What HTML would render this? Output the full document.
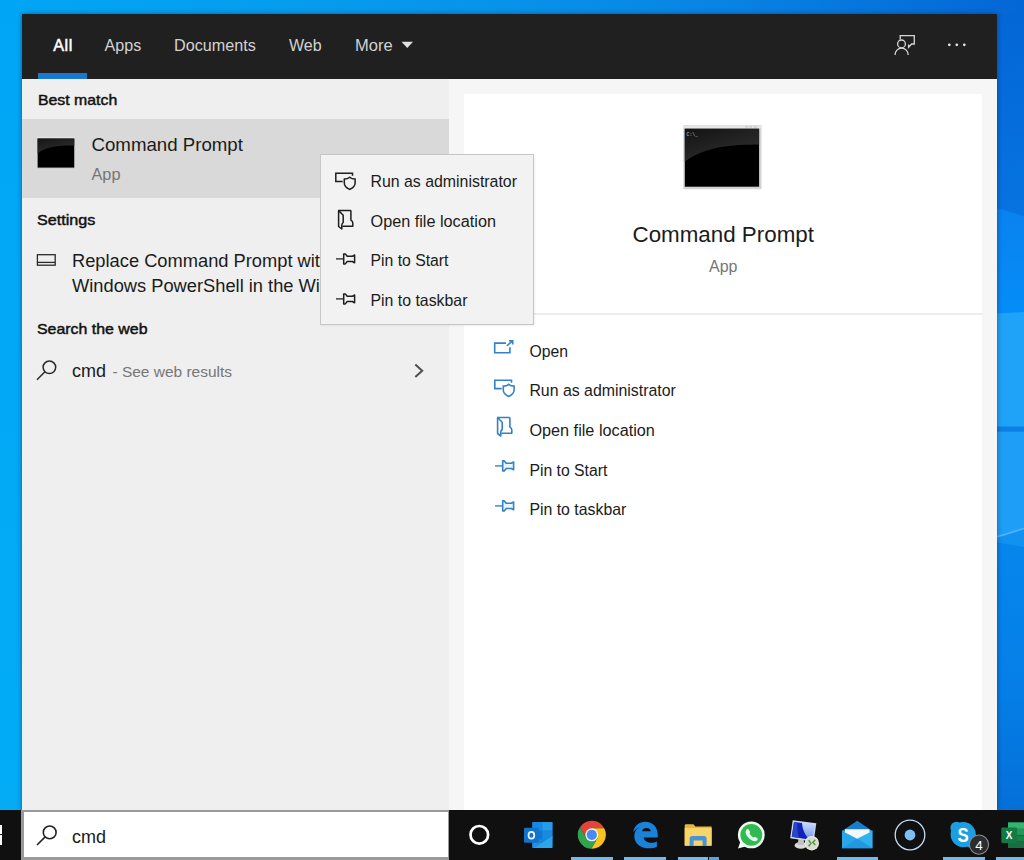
<!DOCTYPE html>
<html lang="en">
<head>
<meta charset="utf-8">
<title>Search - Command Prompt</title>
<style>
html,body{margin:0;padding:0;}
body{width:1024px;height:860px;overflow:hidden;position:relative;font-family:"Liberation Sans",Arial,sans-serif;background:#0a84e4;}
.abs,.t{position:absolute;}
.t{white-space:pre;}
svg{position:absolute;overflow:visible;}
#desk{left:0;top:0;width:1024px;height:860px;background:linear-gradient(90deg,#01a6f5 0%,#069cee 30%,#0892ea 50%,#0884e4 70%,#0570da 90%,#0467d6 100%);}
#deskL{left:0;top:0;width:22px;height:810px;background:linear-gradient(180deg,#01a5f5,#03acf5);}
#panel{left:21.5px;top:14px;width:975.3px;height:796px;background:#f6f6f6;box-shadow:0 0 5px rgba(0,20,60,0.45);}
#hdr{left:21.5px;top:14px;width:975.3px;height:64.6px;background:#202020;}
#leftpane{left:21.5px;top:78.6px;width:427.5px;height:731.4px;background:#efefef;}
#sel{left:21.5px;top:118.6px;width:427.5px;height:79px;background:#d9d9d9;}
#card1{left:464px;top:94.2px;width:517.5px;height:218.8px;background:#fff;}
#card2{left:464px;top:315px;width:517.5px;height:495px;background:#fff;}
#ctx{left:320px;top:154px;width:212px;height:169px;background:#f2f2f2;border:1px solid #c6c6c6;box-shadow:1px 1px 2px rgba(0,0,0,0.06);}
#task{left:0;top:810px;width:1024px;height:50px;background:#101010;}
#sbox{left:21px;top:810px;width:428px;height:50px;background:#9a9a9a;}
#sboxin{left:24px;top:812px;width:424px;height:45px;background:#fff;}
.ind{position:absolute;top:857px;height:3px;background:#76b9ed;}
</style>
</head>
<body>
<div id="desk" class="abs"></div>
<div id="deskL" class="abs"></div>
<svg style="left:990px;top:14px" width="34" height="796" viewBox="990 14 34 796">
<defs><linearGradient id="gr1" x1="0" y1="0" x2="0" y2="1"><stop offset="0" stop-color="#0467d6"/><stop offset="1" stop-color="#0674e2"/></linearGradient>
<linearGradient id="gr1b" x1="0" y1="0" x2="0" y2="1"><stop offset="0" stop-color="#0a82ee"/><stop offset="1" stop-color="#058df7"/></linearGradient>
<linearGradient id="gr2" x1="0" y1="0" x2="0" y2="1"><stop offset="0" stop-color="#0686ec"/><stop offset="0.5" stop-color="#0580e8"/><stop offset="1" stop-color="#0470d8"/></linearGradient></defs>
<rect x="990" y="14" width="34" height="210" fill="url(#gr1)"/>
<path d="M990 206 L1024 216 V316 H990 Z" fill="url(#gr1b)"/>
<path d="M990 314 L1024 312 V428 H990 Z" fill="#1ea3f9"/>
<rect x="990" y="426.5" width="34" height="5" fill="#0a80e2"/>
<rect x="990" y="431.5" width="34" height="106" fill="#1e9ef6"/>
<path d="M990 539 L1024 528.5 V550 H990 Z" fill="#1292f0"/>
<path d="M990 541 L1024 547 V810 H990 Z" fill="url(#gr2)"/>
<path d="M990 539 L1024 528.5" stroke="#52b6f9" stroke-width="1.6"/>
</svg>
<div id="panel" class="abs"></div>
<div id="hdr" class="abs"></div>
<div id="leftpane" class="abs"></div>
<div id="sel" class="abs"></div>
<div id="card1" class="abs"></div>
<div id="card2" class="abs"></div>
<div class="t" style="left:53.3px;top:37px;font-size:16.2px;line-height:16.2px;color:#ffffff;letter-spacing:0.5px;-webkit-text-stroke:0.5px #fff;">All</div>
<div class="t" style="left:104.5px;top:37px;font-size:16.1px;line-height:16.1px;color:#d2d2d2;">Apps</div>
<div class="t" style="left:174px;top:37px;font-size:16.2px;line-height:16.2px;color:#d2d2d2;">Documents</div>
<div class="t" style="left:289px;top:38px;font-size:16.0px;line-height:16.0px;color:#d2d2d2;">Web</div>
<div class="t" style="left:355px;top:37px;font-size:16.5px;line-height:16.5px;color:#d2d2d2;">More</div>
<div class="abs" style="left:37.8px;top:73.2px;width:49.2px;height:5.4px;background:#1a78d2;"></div>
<svg style="left:401px;top:41px" width="13" height="8" viewBox="0 0 13 8"><path d="M0.5 0.8 H12 L6.25 7 Z" fill="#e0e0e0"/></svg>
<svg style="left:890px;top:30px" width="30" height="30" viewBox="890 30 30 30" fill="none" stroke="#d6d6d6" stroke-width="1.3">
<path d="M900.2 39.5 V35.6 H914.3 V44 H911.6 L908.6 47.4 V44.6"/>
<circle cx="901.5" cy="43.9" r="3.9"/>
<path d="M895 54.9 A6.6 6.8 0 0 1 908.2 54.9"/>
</svg>
<svg style="left:945px;top:40px" width="24" height="10" viewBox="945 40 24 10"><circle cx="949.3" cy="44.8" r="1.35" fill="#e6e6e6"/><circle cx="956.8" cy="44.8" r="1.35" fill="#e6e6e6"/><circle cx="964.3" cy="44.8" r="1.35" fill="#e6e6e6"/></svg>
<div class="t" style="left:37.6px;top:93px;font-size:14.6px;line-height:14.6px;color:#111;-webkit-text-stroke:0.45px #111;transform:scaleX(1.085);transform-origin:0 0;">Best match</div>
<div class="t" style="left:91.5px;top:136px;font-size:18.67px;line-height:18.67px;color:#1b1b1b;">Command Prompt</div>
<div class="t" style="left:91.5px;top:166px;font-size:16.3px;line-height:16.3px;color:#767676;">App</div>
<div class="t" style="left:37.4px;top:213px;font-size:14.6px;line-height:14.6px;color:#111;-webkit-text-stroke:0.45px #111;transform:scaleX(1.105);transform-origin:0 0;">Settings</div>
<div class="t" style="left:72px;top:252px;font-size:18.3px;line-height:18.3px;color:#1b1b1b;">Replace Command Prompt wit</div>
<div class="t" style="left:72px;top:277px;font-size:18.3px;line-height:18.3px;color:#1b1b1b;">Windows PowerShell in the Wi</div>
<div class="t" style="left:37.4px;top:322px;font-size:14.6px;line-height:14.6px;color:#111;-webkit-text-stroke:0.45px #111;transform:scaleX(1.09);transform-origin:0 0;">Search the web</div>
<div class="t" style="left:72px;top:362px;font-size:18.0px;line-height:18.0px;color:#1b1b1b;">cmd</div>
<div class="t" style="left:112.5px;top:364px;font-size:15.47px;line-height:15.47px;color:#767676;">- See web results</div>
<svg style="left:36px;top:136px" width="41" height="34" viewBox="36 136 41 34">
<defs><linearGradient id="gs" x1="0" y1="0" x2="0.6" y2="1"><stop offset="0" stop-color="#161616"/><stop offset="1" stop-color="#2f2f2f"/></linearGradient></defs>
<rect x="37.2" y="136.7" width="37.8" height="31.6" fill="#e4e4e4"/>
<rect x="37.2" y="167.4" width="37.8" height="1.2" fill="#c9c9c9"/>
<rect x="37.6" y="138.6" width="36.7" height="29" fill="#000"/>
<path d="M37.6 138.6 H74.3 V145.6 C60 145.4 46 146.5 37.6 153.4 Z" fill="url(#gs)"/>
</svg>
<svg style="left:36px;top:253px" width="21" height="14" viewBox="36 253 21 14" fill="none" stroke="#2a2a2a" stroke-width="1.3">
<rect x="37.4" y="254.7" width="17.8" height="10.5"/><path d="M37.4 262.4 H55.2"/>
</svg>
<svg style="left:35.0px;top:358.5px" width="22.7" height="22.8" viewBox="35.0 358.5 22.7 22.8" fill="none" stroke="#2a2a2a" stroke-width="1.5"><circle cx="49.4" cy="366.8" r="6.3"/><path d="M44.96 371.27 L37.0 379.3" stroke-linecap="butt"/></svg>
<svg style="left:410px;top:360px" width="20" height="22" viewBox="410 360 20 22" fill="none" stroke="#4e4e4e" stroke-width="2"><path d="M415.3 364.4 L422.2 370.7 L415.3 377"/></svg>
<svg style="left:682px;top:124px" width="82" height="68" viewBox="682 124 82 68">
<defs><linearGradient id="gb" x1="0" y1="0" x2="0.7" y2="1"><stop offset="0" stop-color="#131313"/><stop offset="1" stop-color="#303030"/></linearGradient></defs>
<rect x="683.3" y="124.9" width="78.2" height="64.3" rx="0.8" fill="#d4d4d4"/>
<rect x="683.9" y="125.4" width="77" height="3" fill="#e6e6e6"/>
<rect x="745.5" y="126.2" width="2.4" height="1.3" fill="#c4c4c4"/><rect x="749.6" y="126.2" width="2.4" height="1.3" fill="#c4c4c4"/><rect x="753.7" y="126.2" width="3.4" height="1.3" fill="#c9c9c9"/>
<rect x="684.8" y="128.8" width="74.3" height="57.9" fill="#000"/>
<path d="M684.8 128.8 H759.1 V144.4 C732 144.6 706 146 684.8 161.6 Z" fill="url(#gb)"/>
<text x="686.6" y="135.9" font-family="Liberation Mono, monospace" font-size="5.2" fill="#c8c8c8" textLength="11.2" lengthAdjust="spacingAndGlyphs">C:\_</text>
</svg>
<div class="t" style="left:632.5px;top:224px;font-size:22.37px;line-height:22.37px;color:#1b1b1b;">Command Prompt</div>
<div class="t" style="left:709px;top:259px;font-size:16.0px;line-height:16.0px;color:#767676;">App</div>
<div class="abs" style="left:464px;top:313px;width:519px;height:2px;background:#ededed;"></div>
<div id="ctx" class="abs"></div>
<svg style="left:333.0px;top:171.0px" width="24" height="20" viewBox="333 171 24 20" fill="none" stroke="#1e1e1e" stroke-width="1.5">
<path d="M342.7 181.6 H335.8 V173.3 H352.5 V175.7"/>
<path d="M349.7 177.3 C348.3 178.5 346.4 179 344.3 179.1 V183 C344.3 186 346.6 188 349.7 189.4 C352.8 188 355.1 186 355.1 183 V179.1 C353 179 351.1 178.5 349.7 177.3 Z"/>
</svg>
<svg style="left:335.0px;top:208.0px" width="20" height="24" viewBox="335 208 20 24" fill="none" stroke="#1e1e1e" stroke-width="1.5" stroke-linejoin="round">
<path d="M338.6 210.5 H350.2 Q350.9 210.5 350.9 211.2 V220.1 Q352.8 221.3 352.8 223 V226.3 H342.4"/>
<path d="M338.6 210.5 L343.2 215.2 V222.5 Q341.8 223.6 341.8 225 V229 L338.6 226.5 Z"/>
</svg>
<svg style="left:334.0px;top:250.0px" width="24" height="18" viewBox="334 250 24 18" fill="none" stroke="#1e1e1e" stroke-width="1.5">
<path d="M336 258.9 H343.4" stroke-width="1.27"/>
<path d="M343.7 253.9 H345.3 L347.2 256.3 H352.3 L354.6 255 V262.8 L352.3 261.5 H347.2 L345.3 263.9 H343.7 Z" stroke-linejoin="round"/>
</svg>
<svg style="left:334.0px;top:289.7px" width="24" height="18" viewBox="334 250 24 18" fill="none" stroke="#1e1e1e" stroke-width="1.5">
<path d="M336 258.9 H343.4" stroke-width="1.27"/>
<path d="M343.7 253.9 H345.3 L347.2 256.3 H352.3 L354.6 255 V262.8 L352.3 261.5 H347.2 L345.3 263.9 H343.7 Z" stroke-linejoin="round"/>
</svg>
<div class="t" style="left:370.5px;top:174px;font-size:15.88px;line-height:15.88px;color:#1b1b1b;">Run as administrator</div>
<div class="t" style="left:370.5px;top:213px;font-size:16.24px;line-height:16.24px;color:#1b1b1b;">Open file location</div>
<div class="t" style="left:370.5px;top:253px;font-size:15.77px;line-height:15.77px;color:#1b1b1b;">Pin to Start</div>
<div class="t" style="left:370.5px;top:293px;font-size:15.86px;line-height:15.86px;color:#1b1b1b;">Pin to taskbar</div>
<svg style="left:492px;top:338px" width="24" height="18" viewBox="492 338 24 18" fill="none" stroke="#3581c6" stroke-width="1.6">
<path d="M506 343.1 H494.7 V352.8 H509.9 V347.2"/>
<path d="M506.9 345.9 L512.4 340.8 M509 340.7 H512.7 V344.4"/>
</svg>
<svg style="left:491.7px;top:378.3px" width="24" height="20" viewBox="333 171 24 20" fill="none" stroke="#3581c6" stroke-width="1.6">
<path d="M342.7 181.6 H335.8 V173.3 H352.5 V175.7"/>
<path d="M349.7 177.3 C348.3 178.5 346.4 179 344.3 179.1 V183 C344.3 186 346.6 188 349.7 189.4 C352.8 188 355.1 186 355.1 183 V179.1 C353 179 351.1 178.5 349.7 177.3 Z"/>
</svg>
<svg style="left:493.7px;top:415.3px" width="20" height="24" viewBox="335 208 20 24" fill="none" stroke="#3581c6" stroke-width="1.6" stroke-linejoin="round">
<path d="M338.6 210.5 H350.2 Q350.9 210.5 350.9 211.2 V220.1 Q352.8 221.3 352.8 223 V226.3 H342.4"/>
<path d="M338.6 210.5 L343.2 215.2 V222.5 Q341.8 223.6 341.8 225 V229 L338.6 226.5 Z"/>
</svg>
<svg style="left:492.7px;top:457.3px" width="24" height="18" viewBox="334 250 24 18" fill="#eaf6fe" stroke="#3581c6" stroke-width="1.6">
<path d="M336 258.9 H343.4" stroke-width="1.36"/>
<path d="M343.7 253.9 H345.3 L347.2 256.3 H352.3 L354.6 255 V262.8 L352.3 261.5 H347.2 L345.3 263.9 H343.7 Z" stroke-linejoin="round"/>
</svg>
<svg style="left:492.7px;top:497.0px" width="24" height="18" viewBox="334 250 24 18" fill="#eaf6fe" stroke="#3581c6" stroke-width="1.6">
<path d="M336 258.9 H343.4" stroke-width="1.36"/>
<path d="M343.7 253.9 H345.3 L347.2 256.3 H352.3 L354.6 255 V262.8 L352.3 261.5 H347.2 L345.3 263.9 H343.7 Z" stroke-linejoin="round"/>
</svg>
<div class="t" style="left:529.4px;top:344px;font-size:15.78px;line-height:15.78px;color:#1b1b1b;">Open</div>
<div class="t" style="left:529.4px;top:383px;font-size:15.88px;line-height:15.88px;color:#1b1b1b;">Run as administrator</div>
<div class="t" style="left:529.4px;top:422px;font-size:16.24px;line-height:16.24px;color:#1b1b1b;">Open file location</div>
<div class="t" style="left:529.4px;top:463px;font-size:15.77px;line-height:15.77px;color:#1b1b1b;">Pin to Start</div>
<div class="t" style="left:529.4px;top:502px;font-size:15.86px;line-height:15.86px;color:#1b1b1b;">Pin to taskbar</div>
<div id="task" class="abs"></div>
<div id="sbox" class="abs"></div>
<div id="sboxin" class="abs"></div>
<div class="abs" style="left:0;top:825px;width:2px;height:8.5px;background:#fff"></div><div class="abs" style="left:0;top:834.7px;width:2px;height:10px;background:#fff"></div>
<svg style="left:34.7px;top:823.6px" width="23.1" height="23.0" viewBox="34.7 823.6 23.1 23.0" fill="none" stroke="#222" stroke-width="1.6"><circle cx="49.4" cy="832" r="6.4"/><path d="M44.86 836.51 L36.7 844.6" stroke-linecap="butt"/></svg>
<div class="t" style="left:72px;top:828px;font-size:18.0px;line-height:18.0px;color:#1b1b1b;">cmd</div>
<svg style="left:465px;top:821px" width="28" height="28" viewBox="465 821 28 28"><circle cx="479.3" cy="834.8" r="8.8" fill="none" stroke="#fff" stroke-width="2.7"/></svg>
<svg style="left:0;top:810px" width="1024" height="50" viewBox="0 810 1024 50">
<!-- Outlook -->
<g>
<rect x="532.4" y="822" width="20" height="26" rx="1.2" fill="#1585de"/>
<rect x="532.4" y="822" width="10" height="8.6" fill="#1888e0"/>
<rect x="542.4" y="822" width="10" height="8.6" fill="#239cea"/>
<rect x="532.4" y="830.6" width="10" height="8.6" fill="#1277d2"/>
<rect x="542.4" y="830.6" width="10" height="8.6" fill="#1a8ae0"/>
<path d="M532.4 839.2 L552.4 848 H532.4 Z" fill="#1d92e2"/>
<path d="M552.4 836 L534 848 H552.4 Z" fill="#2ba5ec"/>
<rect x="524" y="827.8" width="15" height="15" rx="1.2" fill="#1272cc"/>
<ellipse cx="531.4" cy="835.2" rx="2.9" ry="3.4" fill="none" stroke="#eaf6ff" stroke-width="1.7"/>
</g>
<!-- Chrome -->
<g>
<path d="M586.17 838.05 L579.97 827.31 A14.0 14.0 0 0 1 604.20 828.30 L591.80 828.30 L591.80 834.80 Z" fill="#e3453a"/>
<path d="M591.80 828.30 L604.20 828.30 A14.0 14.0 0 0 1 591.23 848.79 L597.43 838.05 L591.80 834.80 Z" fill="#f9c21c"/>
<path d="M597.43 838.05 L591.23 848.79 A14.0 14.0 0 0 1 579.97 827.31 L586.17 838.05 L591.80 834.80 Z" fill="#34a350"/>
<circle cx="591.8" cy="834.8" r="6.5" fill="#f1f1f1"/>
<circle cx="591.8" cy="834.8" r="5.1" fill="#4a8af2"/>
</g>
<!-- Edge -->
<g transform="translate(629.7 819.2) scale(1.315 1.21)" fill="#1b82da">
<path d="M2.74 10.81 C3.83 -1.36 22.8 -1.36 21.3 15.2 H10.6 C11.4 20.4 18.21 20.2 20.65 18.2 V22.72 C15.23 25.67 3.52 24.02 3.52 14.06 C3.52 9.21 6.42 6.65 9.62 5.19 C6.92 6.42 3.12 9.39 2.74 10.81 Z M9.4 9.9 H16 C15.8 6.3 9.8 6.3 9.4 9.9 Z"/>
</g>
<!-- Explorer -->
<g>
<path d="M684.7 825.6 Q684.7 824.3 686 824.3 H693.4 L695.4 826.6 H711.6 V845.7 H684.7 Z" fill="#e9b53a"/>
<rect x="684.7" y="828" width="26.9" height="17.7" fill="#f8d568"/>
<path d="M689.6 846 V838.6 Q689.6 836 692.2 836 H704 Q706.6 836 706.6 838.6 V846 H702.6 V840.6 H693.6 V846 Z" fill="#4b93d4"/>
</g>
<!-- WhatsApp -->
<g>
<circle cx="751.3" cy="834.9" r="13.4" fill="#eefbf1"/>
<path d="M740.4 841.6 L738 848.4 L745.6 846.4 Z" fill="#f2fbf4"/>
<circle cx="751.3" cy="834.9" r="10.9" fill="#31ba51"/>
<g transform="translate(751.3 834.9) scale(0.9) translate(-751.7 -834.2)">
<path d="M746.4 828.2 C747.2 827.4 748.2 827.4 748.8 828.2 L750.2 830.6 C750.5 831.3 750.2 831.9 749.6 832.5 C750.6 834.6 752.2 836.2 754.2 837.2 C754.8 836.5 755.4 836.2 756.1 836.6 L758.4 838 C759 838.6 759 839.5 758.3 840.2 C757 841.6 755.2 841.6 753.2 840.8 C749.6 839.2 747 836.4 745.7 833 C745.1 831.2 745.3 829.4 746.4 828.2 Z" fill="#e9fbee"/>
</g>
</g>
<!-- Remote desktop -->
<g>
<defs><linearGradient id="rdl" x1="0" y1="0" x2="0" y2="1"><stop offset="0" stop-color="#ccdcfb"/><stop offset="1" stop-color="#6f96ec"/></linearGradient></defs>
<ellipse cx="800.8" cy="845.4" rx="6.2" ry="3.3" fill="#d9d9d6"/>
<path d="M798.6 838 H803.6 L804.2 845 H797.6 Z" fill="#c2c2c0"/>
<path d="M792.7 820.2 L816.3 823.2 L813.6 841.8 L790.2 838.2 Z" fill="#c9d8f2"/>
<path d="M794 822 L814.8 824.7 L812.4 840 L791.8 836.8 Z" fill="url(#rdl)"/>
<path d="M794 822 L802 823 C802.6 830 805 835 809.5 839.6 L791.8 836.8 Z" fill="#1322b8"/>
<path d="M794 822 L797.5 822.5 C797 828 797.6 833 799 838 L791.8 836.8 Z" fill="#2a44cc"/>
<circle cx="811.8" cy="843.2" r="7.2" fill="#e9e9e4"/>
<circle cx="811.8" cy="843.2" r="6" fill="#d6dccf"/>
<path d="M808.6 840.2 L811 843.2 L808.6 846.2 M815.3 839.8 L812.8 842.4 L815.3 845" fill="none" stroke="#4c9a3a" stroke-width="1.4"/>
</g>
<!-- Mail -->
<g>
<path d="M842 831 L857.2 820.8 L872.4 831 Z" fill="#1c7ccc"/>
<rect x="842" y="830.6" width="30.4" height="17.6" fill="#2aa5e8"/>
<path d="M857.2 838.4 L872.4 830.6 V848.2 Z" fill="#31b1ee"/>
<path d="M857.2 838.4 L872.4 848.2 H842 Z" fill="#2099e0"/>
<path d="M845 829.3 H869.5 V832.4 L857.2 838.8 L845 832.4 Z" fill="#f4f8fb"/>
</g>
<!-- circle app -->
<circle cx="910" cy="835" r="14.8" fill="none" stroke="#c4dcf2" stroke-width="1.3"/>
<circle cx="910" cy="835" r="5.4" fill="#80bdf0"/>
<!-- Skype -->
<g>
<circle cx="963.2" cy="834.6" r="12.6" fill="#1c9fe2"/>
<circle cx="956.4" cy="827.8" r="6" fill="#1c9fe2"/>
<circle cx="970" cy="841.4" r="6" fill="#1c9fe2"/>
<text transform="translate(963.2 842) scale(0.84 1)" x="0" y="0" text-anchor="middle" font-family="Liberation Sans, Arial, sans-serif" font-weight="700" font-size="20" fill="#fff">S</text>
<circle cx="979" cy="844.6" r="9.6" fill="#2c2c2e" stroke="#8c8c8c" stroke-width="1.1"/>
<text x="979" y="849.6" text-anchor="middle" font-family="Liberation Sans, Arial, sans-serif" font-size="13.5" fill="#fff">4</text>
</g>
<!-- Excel -->
<g>
<rect x="1008" y="822.3" width="16" height="6.6" fill="#34b470"/>
<rect x="1008" y="828.9" width="16" height="6.5" fill="#23975a"/>
<rect x="1008" y="835.4" width="16" height="6.4" fill="#1a8049"/>
<rect x="1008" y="841.8" width="16" height="6.2" fill="#176f40"/>
<rect x="1001.3" y="827.5" width="15.8" height="15.4" rx="1.2" fill="#137a43"/>
<text x="1009.2" y="838.8" text-anchor="middle" font-family="Liberation Sans, Arial, sans-serif" font-weight="700" font-size="10" fill="#fff">X</text>
</g>
</svg>
<div class="ind" style="left:571px;width:42px"></div><div class="ind" style="left:624px;width:42px"></div><div class="ind" style="left:677.5px;width:30.5px"></div><div class="ind" style="left:836.5px;width:41.5px"></div><div class="ind" style="left:943px;width:41.5px"></div><div class="ind" style="left:996px;width:28px"></div><div class="ind" style="left:709px;width:10px;background:#5fa0d6"></div>
</body>
</html>
